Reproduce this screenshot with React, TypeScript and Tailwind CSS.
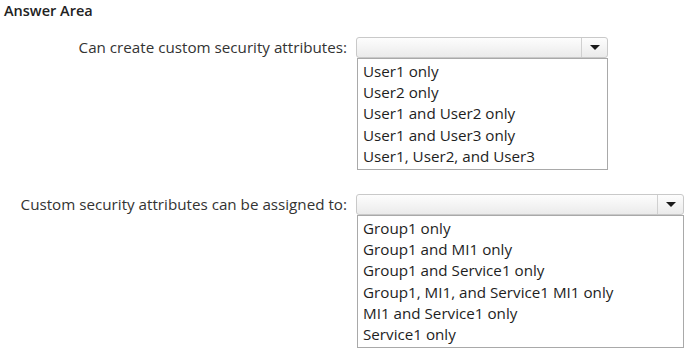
import React from "react";

function Arrow() {
  return (
    <svg width="10" height="5" viewBox="0 0 10 5" className="block">
      <path d="M0 0 H10 L5 5 Z" fill="#1a1a1a" />
    </svg>
  );
}

function Dropdown({ width, options }: { width: number; options: string[] }) {
  return (
    <div className="flex flex-col" style={{ width }}>
      <div className="flex h-[21px] rounded-[3px] border border-[#c9c9c9] bg-gradient-to-b from-[#fdfdfd] to-[#ebebeb]">
        <div className="flex-1" />
        <div className="flex w-[26px] items-center justify-center border-l border-[#d0d0d0]">
          <Arrow />
        </div>
      </div>
      <div className="ml-[1px] border border-[#a9a9a9] bg-white py-[2px] pl-[5px]">
        {options.map((o) => (
          <div key={o} className="h-[21.2px] leading-[21.2px] whitespace-nowrap text-[#1e1e1e]">
            {o}
          </div>
        ))}
      </div>
    </div>
  );
}

export default function App() {
  return (
    <div
      className="relative h-[356px] w-[693px] overflow-hidden bg-white text-[15.2px]"
      style={{ fontFamily: '"Open Sans", "Noto Sans", sans-serif' }}
    >
      <div className="pl-[4px] pt-[1px] text-[14.5px] font-semibold leading-[20px] text-[#222]">Answer Area</div>
      <div className="mt-[16px] flex items-start">
        <div className="h-[21px] w-[347px] text-right leading-[21px] text-[#333]">Can create custom security attributes:</div>
        <div className="ml-[9px]">
          <Dropdown
            width={252}
            options={["User1 only", "User2 only", "User1 and User2 only", "User1 and User3 only", "User1, User2, and User3"]}
          />
        </div>
      </div>
      <div className="mt-[24px] flex items-start">
        <div className="h-[21px] w-[347px] text-right leading-[21px] text-[#333]">Custom security attributes can be assigned to:</div>
        <div className="ml-[9px]">
          <Dropdown
            width={328}
            options={[
              "Group1 only",
              "Group1 and MI1 only",
              "Group1 and Service1 only",
              "Group1, MI1, and Service1 MI1 only",
              "MI1 and Service1 only",
              "Service1 only",
            ]}
          />
        </div>
      </div>
    </div>
  );
}
